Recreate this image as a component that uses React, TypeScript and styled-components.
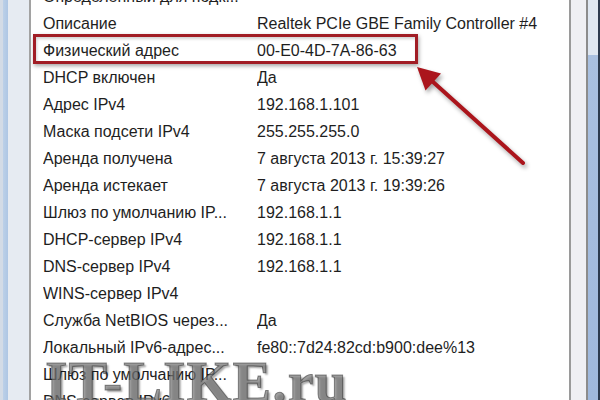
import React from "react";
import styled, { createGlobalStyle } from "styled-components";

const GlobalStyle = createGlobalStyle`
  html, body { margin: 0; padding: 0; }
  body { width: 600px; height: 400px; overflow: hidden; background: #fff; }
`;

const Window = styled.div`
  display: flex;
  width: 600px;
  height: 400px;
  overflow: hidden;
  font-family: "Liberation Sans", Arial, sans-serif;
`;

const LeftFrame = styled.div`
  width: 8px;
  flex: none;
  background: linear-gradient(90deg, #d3dbe6 0, #d3dbe6 3px, #bcd0e8 3px, #aec6e4 100%);
`;

const SidePane = styled.div<{ $side: "left" | "right" }>`
  flex: none;
  width: ${(p) => (p.$side === "left" ? "21px" : "15px")};
  background: ${(p) => (p.$side === "left" ? "#e6ebf2" : "#efeff3")};
  border-left: ${(p) => (p.$side === "right" ? "2px solid #9a9a9a" : "none")};
  border-right: 2px solid ${(p) => (p.$side === "left" ? "#a2a2a2" : "#8c8c8c")};
`;

const RightFrame = styled.div`
  width: 10px;
  flex: none;
  border-right: 2px solid #2c3a4e;
  background: linear-gradient(180deg, #dfe7f1 0, #dfe7f1 55px, #a9c0e0 55px, #9fb8dc 100%);
`;

const Content = styled.div`
  position: relative;
  flex: 1;
  background: #ffffff;
  overflow: hidden;
`;

const List = styled.div`
  display: flex;
  flex-direction: column;
  margin-top: -17px;
`;

const Row = styled.div<{ $highlight?: boolean }>`
  position: relative;
  display: grid;
  grid-template-columns: 214px 1fr;
  height: 27px;
  padding-left: 12px;
  align-items: center;
  font-size: 16px;
  line-height: 27px;
  color: #1e1e1e;
  white-space: nowrap;

  ${(p) =>
    p.$highlight &&
    `
    &::after {
      content: "";
      position: absolute;
      left: 2px;
      top: -3px;
      width: 379px;
      height: 24px;
      border: 3px solid #a11d25;
      box-shadow: 1px 2px 4px rgba(0, 0, 0, 0.35), inset 1px 2px 3px rgba(0, 0, 0, 0.18);
      pointer-events: none;
    }
  `}
`;

const Label = styled.span`
  overflow: hidden;
`;

const Value = styled.span`
  overflow: hidden;
`;

const ArrowSvg = styled.svg`
  position: absolute;
  left: 0;
  top: 0;
  filter: drop-shadow(2px 3px 2px rgba(0, 0, 0, 0.35));
  pointer-events: none;
`;

const Watermark = styled.div`
  position: absolute;
  left: 14px;
  top: 353px;
  font-family: "Liberation Serif", "Times New Roman", serif;
  font-weight: bold;
  font-size: 58px;
  line-height: 1;
  letter-spacing: 1px;
  color: rgba(120, 120, 120, 0.7);
  -webkit-text-stroke: 1px rgba(40, 40, 40, 0.5);
  text-shadow: 2px 2px 2px rgba(0, 0, 0, 0.35);
  white-space: nowrap;
  pointer-events: none;
`;

type Item = { label: string; value: string; highlight?: boolean };

const items: Item[] = [
  { label: "Определенный для подк...", value: "" },
  { label: "Описание", value: "Realtek PCIe GBE Family Controller #4" },
  { label: "Физический адрес", value: "00-E0-4D-7A-86-63", highlight: true },
  { label: "DHCP включен", value: "Да" },
  { label: "Адрес IPv4", value: "192.168.1.101" },
  { label: "Маска подсети IPv4", value: "255.255.255.0" },
  { label: "Аренда получена", value: "7 августа 2013 г. 15:39:27" },
  { label: "Аренда истекает", value: "7 августа 2013 г. 19:39:26" },
  { label: "Шлюз по умолчанию IP...", value: "192.168.1.1" },
  { label: "DHCP-сервер IPv4", value: "192.168.1.1" },
  { label: "DNS-сервер IPv4", value: "192.168.1.1" },
  { label: "WINS-сервер IPv4", value: "" },
  { label: "Служба NetBIOS через...", value: "Да" },
  { label: "Локальный IPv6-адрес...", value: "fe80::7d24:82cd:b900:dee%13" },
  { label: "Шлюз по умолчанию IP...", value: "" },
  { label: "DNS-сервер IPv6", value: "" },
];

export default function App() {
  return (
    <>
      <GlobalStyle />
      <Window>
        <LeftFrame />
        <SidePane $side="left" />
        <Content>
          <List>
            {items.map((it, i) => (
              <Row key={i} $highlight={it.highlight}>
                <Label>{it.label}</Label>
                <Value>{it.value}</Value>
              </Row>
            ))}
          </List>
          <ArrowSvg width="538" height="400" viewBox="31 0 538 400">
            <line x1="523" y1="163" x2="432" y2="81" stroke="#ab151c" strokeWidth="4" strokeLinecap="round" />
            <polygon points="417,67 441,73.5 425.5,90.5" fill="#ab151c" />
          </ArrowSvg>
          <Watermark>IT-LIKE.ru</Watermark>
        </Content>
        <SidePane $side="right" />
        <RightFrame />
      </Window>
    </>
  );
}
